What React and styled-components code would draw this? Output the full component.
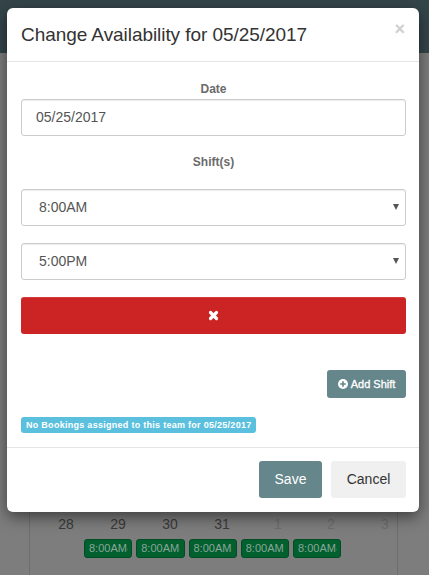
import React from 'react'
import styled, { createGlobalStyle } from 'styled-components'

const Global = createGlobalStyle`
  html, body { margin: 0; padding: 0; height: 100%; }
  body { font-family: "Liberation Sans", Arial, sans-serif; overflow: hidden; }
`

const Page = styled.div`
  width: 429px;
  height: 575px;
  background: #7d7d7d;
  overflow: hidden;
`
const TopBar = styled.div`
  height: 53px;
  background: #34454a;
`
const Calendar = styled.div`
  margin: 451px 31px 0 29px;
  height: 71px;
  border-left: 1px solid #6e6e6e;
  border-right: 1px solid #6e6e6e;
`
const Days = styled.div`
  display: grid;
  grid-template-columns: 52px 52px 52px 52px 60px 46px 62px;
  padding-left: 10px;
  padding-top: 10px;
`
const Day = styled.div`
  font-size: 14px;
  line-height: 20px;
  text-align: center;
  color: ${p => (p.$muted ? '#6c6c6c' : '#3a3a3a')};
`
const Shifts = styled.div`
  display: flex;
  gap: 4px;
  margin: 5px 0 0 54px;
`
const ShiftTag = styled.div`
  width: 48.25px;
  height: 19px;
  box-sizing: border-box;
  padding-left: 4px;
  background: #02602f;
  border: 1px solid #024d26;
  border-radius: 3px;
  font-size: 11px;
  line-height: 17px;
  color: #8aa598;
`
const ShiftText = styled.span`
  display: block;
  width: 38.5px;
  overflow: hidden;
  white-space: nowrap;
`
const Modal = styled.div`
  position: absolute;
  top: 8px;
  left: 7px;
  width: 412px;
  height: 504px;
  background: #fff;
  border-radius: 6px;
  box-shadow: 0 5px 15px rgba(0, 0, 0, 0.5);
  display: flex;
  flex-direction: column;
`
const Header = styled.div`
  height: 54px;
  box-sizing: border-box;
  border-bottom: 1px solid #e5e5e5;
  padding: 15px 14px 0;
  display: flex;
  justify-content: space-between;
`
const Title = styled.h4`
  margin: 0;
  font-size: 19px;
  line-height: 24px;
  font-weight: 400;
  letter-spacing: -0.06px;
  color: #333;
`
const Close = styled.span`
  font-size: 18px;
  line-height: 12px;
  font-weight: 700;
  color: #cfcfcf;
`
const Body = styled.div`
  flex: 1;
  padding: 0 13px 0 14px;
  display: flex;
  flex-direction: column;
`
const Label = styled.label`
  display: block;
  text-align: center;
  font-size: 12px;
  line-height: 16px;
  font-weight: 700;
  color: #6b6b6b;
  margin-top: ${p => p.$top}px;
  margin-bottom: ${p => p.$bottom}px;
`
const Input = styled.div`
  height: 37px;
  box-sizing: border-box;
  border: 1px solid #ccc;
  border-radius: 3px;
  padding-left: 14px;
  font-size: 14px;
  line-height: 35px;
  color: #555;
  box-shadow: inset 0 1px 1px rgba(0, 0, 0, 0.075);
`
const Select = styled(Input)`
  padding-left: 17px;
  margin-bottom: 17px;
  display: flex;
  justify-content: space-between;
`
const Caret = styled.span`
  width: 0;
  height: 0;
  margin: 14px 6px 0 0;
  border-left: 3px solid transparent;
  border-right: 3px solid transparent;
  border-top: 6px solid #555;
`
const Remove = styled.div`
  height: 37px;
  background: #cc2424;
  border-top: 1px solid #d43c3c;
  box-sizing: border-box;
  border-radius: 3px;
  padding-bottom: 1px;
  display: flex;
  align-items: center;
  justify-content: center;
`
const Actions = styled.div`
  display: flex;
  justify-content: flex-end;
  margin-top: 36px;
`
const AddShift = styled.div`
  width: 79px;
  height: 28px;
  background: #65868a;
  border-radius: 3px;
  display: flex;
  align-items: center;
  justify-content: center;
  gap: 3px;
  font-size: 11px;
  -webkit-text-stroke: 0.3px #fff;
  color: #fff;
`
const Notice = styled.span`
  align-self: flex-start;
  margin-top: 19px;
  width: 235px;
  height: 16px;
  box-sizing: border-box;
  background: #5bc0de;
  border-radius: 3px;
  padding-left: 5px;
  font-size: 9px;
  line-height: 16px;
  font-weight: 700;
  letter-spacing: 0.28px;
  color: #fff;
  white-space: nowrap;
`
const Footer = styled.div`
  height: 65px;
  box-sizing: border-box;
  border-top: 1px solid #e5e5e5;
  padding: 13px 13px 0 0;
  display: flex;
  justify-content: flex-end;
  gap: 9px;
`
const FooterButton = styled.div`
  width: ${p => p.$width}px;
  height: 37px;
  border-radius: 3px;
  background: ${p => (p.$primary ? '#65868a' : '#f0f0f0')};
  color: ${p => (p.$primary ? '#fff' : '#333')};
  font-size: 14px;
  line-height: 37px;
  text-align: center;
`

const XIcon = () => (
  <svg width="11" height="11" viewBox="0 0 11 11">
    <path d="M2.5 2.5l6 6M8.5 2.5l-6 6" stroke="#fff" strokeWidth="3.2" strokeLinecap="round" />
  </svg>
)

const PlusIcon = () => (
  <svg width="10" height="10" viewBox="0 0 10 10">
    <circle cx="5" cy="5" r="5" fill="#fff" />
    <path d="M2.2 5h5.6M5 2.2v5.6" stroke="#65868a" strokeWidth="1.6" />
  </svg>
)

const days = [
  ['28'], ['29'], ['30'], ['31'], ['1', true], ['2', true], ['3', true],
]

export default function App() {
  return (
    <Page>
      <Global />
      <TopBar />
      <Calendar>
        <Days>
          {days.map(([d, muted]) => <Day key={d} $muted={muted}>{d}</Day>)}
        </Days>
        <Shifts>
          {[1, 2, 3, 4, 5].map(i => (
            <ShiftTag key={i}><ShiftText>8:00AM-</ShiftText></ShiftTag>
          ))}
        </Shifts>
      </Calendar>
      <Modal>
        <Header>
          <Title>Change Availability for 05/25/2017</Title>
          <Close>×</Close>
        </Header>
        <Body>
          <Label $top={19} $bottom={2}>Date</Label>
          <Input>05/25/2017</Input>
          <Label $top={18} $bottom={19}>Shift(s)</Label>
          <Select>8:00AM<Caret /></Select>
          <Select>5:00PM<Caret /></Select>
          <Remove><XIcon /></Remove>
          <Actions>
            <AddShift><PlusIcon />Add Shift</AddShift>
          </Actions>
          <Notice>No Bookings assigned to this team for 05/25/2017</Notice>
        </Body>
        <Footer>
          <FooterButton $primary $width={63}>Save</FooterButton>
          <FooterButton $width={75}>Cancel</FooterButton>
        </Footer>
      </Modal>
    </Page>
  )
}
